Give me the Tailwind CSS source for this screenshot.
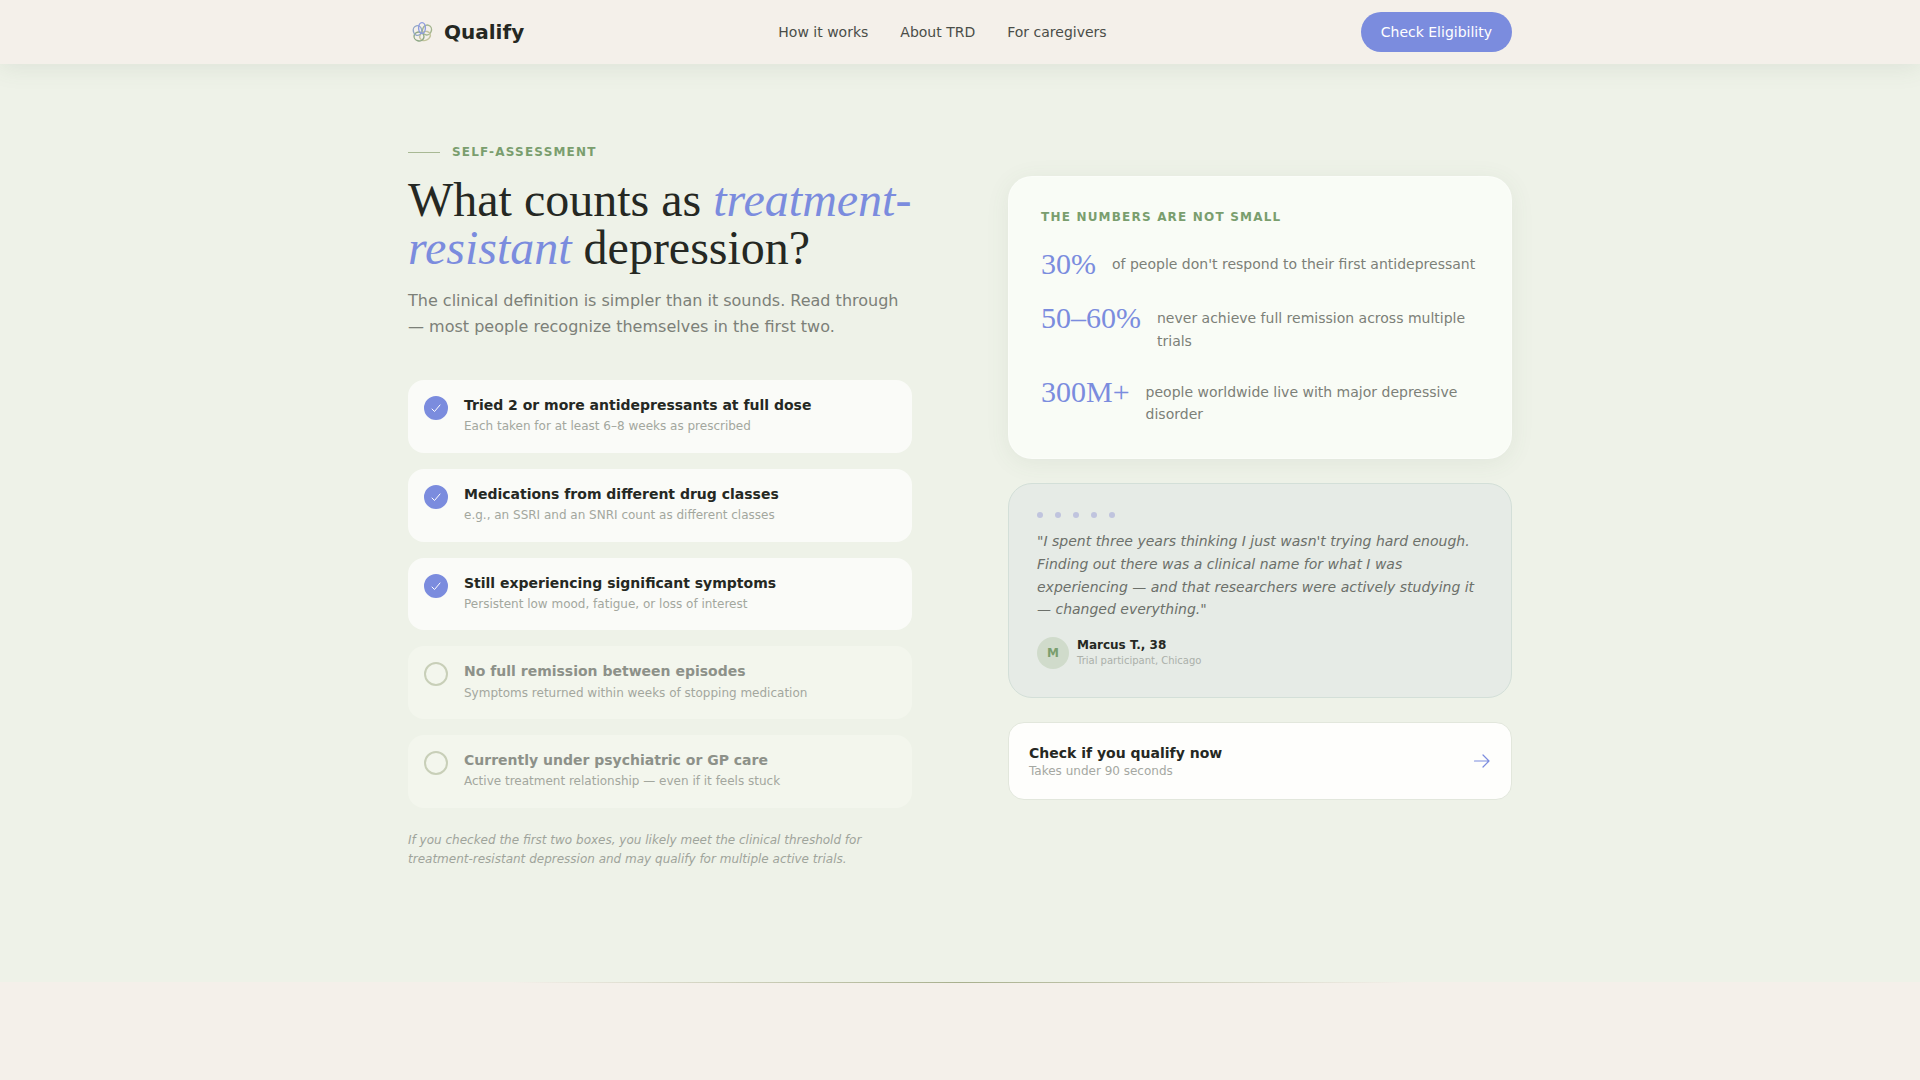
<!DOCTYPE html>
<html lang="en">
<head>
    <meta charset="UTF-8">
    <meta name="viewport" content="width=device-width, initial-scale=1.0">
    <title>Qualify</title>
    <script src="https://cdn.jsdelivr.net/npm/@tailwindcss/browser@4"></script>
</head>
<body class="min-h-screen bg-[#f4f0ea] font-['DejaVu_Sans',sans-serif] text-[#252823]">
    <!-- Navigation -->
    <header class="sticky top-0 z-10 bg-[#f4f0ea] shadow-[0_4px_24px_rgba(80,100,80,0.1)]">
        <div class="mx-auto flex h-16 max-w-[1200px] items-center justify-between px-12">
            <a href="#" class="flex items-center gap-2">
                <svg class="size-7" viewBox="0 0 28 28" fill="none" stroke-width="1.4" aria-hidden="true">
                    <ellipse cx="19" cy="12" rx="4.400" ry="5" stroke="#a3b58f" transform="rotate(20 19 12)" />
                    <ellipse cx="17" cy="18" rx="5.500" ry="4.400" stroke="#c3c49c" transform="rotate(-25 17 18)" />
                    <ellipse cx="11" cy="18.500" rx="5" ry="4.400" stroke="#8fa886" transform="rotate(15 11 18.500)" />
                    <ellipse cx="9.500" cy="12.500" rx="4.200" ry="4.800" stroke="#93a7c6" transform="rotate(-15 9.500 12.500)" />
                    <ellipse cx="14" cy="10" rx="3.400" ry="5.400" stroke="#8c9be0" />
                </svg>
                <span class="text-xl font-bold">Qualify</span>
            </a>
            <nav class="flex gap-8 text-sm text-[#4a4d48]">
                <a href="#">How it works</a>
                <a href="#">About TRD</a>
                <a href="#">For caregivers</a>
            </nav>
            <button type="button" class="h-10 rounded-full bg-[#7b8cde] px-5 text-sm text-white">Check Eligibility</button>
        </div>
    </header>

    <!-- Self-assessment -->
    <main class="bg-[#eef2e8]">
        <div class="mx-auto grid max-w-[1200px] grid-cols-2 gap-24 px-12 pt-20 pb-28">
            <section>
                <div class="mb-4 flex items-center gap-3">
                    <span class="h-px w-8 bg-[#a8b994]"></span>
                    <span class="text-xs font-bold tracking-widest text-[#7a9e6e]">SELF-ASSESSMENT</span>
                </div>
                <h1 class="font-['Liberation_Serif',serif] text-5xl leading-none">What counts as <em class="text-[#7b8cde]">treatment-resistant</em> depression?</h1>
                <p class="mt-4 leading-relaxed text-[#7c8078]">The clinical definition is simpler than it sounds. Read through — most people recognize themselves in the first two.</p>

                <div class="mt-10 flex flex-col gap-4">
                    <label class="group flex items-start gap-4 rounded-2xl bg-[#f3f6ed] p-4 has-checked:bg-[#fafbf8]">
                        <span class="grid shrink-0 place-items-center">
                            <input type="checkbox" checked class="peer col-start-1 row-start-1 size-6 appearance-none rounded-full border-2 border-[#c8cfb8] checked:border-[#7b8cde] checked:bg-[#7b8cde]">
                            <svg class="col-start-1 row-start-1 hidden size-3 peer-checked:block" viewBox="0 0 12 12" fill="none" stroke="#fff" stroke-linecap="round" stroke-linejoin="round" aria-hidden="true"><path d="M2 7l2.500 2.500L10 3" /></svg>
                        </span>
                        <span>
                            <span class="block text-sm leading-snug font-bold text-[#8d9189] group-has-checked:text-[#252823]">Tried 2 or more antidepressants at full dose</span>
                            <span class="mt-0.5 block text-xs leading-relaxed text-[#a3a79e]">Each taken for at least 6–8 weeks as prescribed</span>
                        </span>
                    </label>
                    <label class="group flex items-start gap-4 rounded-2xl bg-[#f3f6ed] p-4 has-checked:bg-[#fafbf8]">
                        <span class="grid shrink-0 place-items-center">
                            <input type="checkbox" checked class="peer col-start-1 row-start-1 size-6 appearance-none rounded-full border-2 border-[#c8cfb8] checked:border-[#7b8cde] checked:bg-[#7b8cde]">
                            <svg class="col-start-1 row-start-1 hidden size-3 peer-checked:block" viewBox="0 0 12 12" fill="none" stroke="#fff" stroke-linecap="round" stroke-linejoin="round" aria-hidden="true"><path d="M2 7l2.500 2.500L10 3" /></svg>
                        </span>
                        <span>
                            <span class="block text-sm leading-snug font-bold text-[#8d9189] group-has-checked:text-[#252823]">Medications from different drug classes</span>
                            <span class="mt-0.5 block text-xs leading-relaxed text-[#a3a79e]">e.g., an SSRI and an SNRI count as different classes</span>
                        </span>
                    </label>
                    <label class="group flex items-start gap-4 rounded-2xl bg-[#f3f6ed] p-4 has-checked:bg-[#fafbf8]">
                        <span class="grid shrink-0 place-items-center">
                            <input type="checkbox" checked class="peer col-start-1 row-start-1 size-6 appearance-none rounded-full border-2 border-[#c8cfb8] checked:border-[#7b8cde] checked:bg-[#7b8cde]">
                            <svg class="col-start-1 row-start-1 hidden size-3 peer-checked:block" viewBox="0 0 12 12" fill="none" stroke="#fff" stroke-linecap="round" stroke-linejoin="round" aria-hidden="true"><path d="M2 7l2.500 2.500L10 3" /></svg>
                        </span>
                        <span>
                            <span class="block text-sm leading-snug font-bold text-[#8d9189] group-has-checked:text-[#252823]">Still experiencing significant symptoms</span>
                            <span class="mt-0.5 block text-xs leading-relaxed text-[#a3a79e]">Persistent low mood, fatigue, or loss of interest</span>
                        </span>
                    </label>
                    <label class="group flex items-start gap-4 rounded-2xl bg-[#f3f6ed] p-4 has-checked:bg-[#fafbf8]">
                        <span class="grid shrink-0 place-items-center">
                            <input type="checkbox" class="peer col-start-1 row-start-1 size-6 appearance-none rounded-full border-2 border-[#c8cfb8] checked:border-[#7b8cde] checked:bg-[#7b8cde]">
                            <svg class="col-start-1 row-start-1 hidden size-3 peer-checked:block" viewBox="0 0 12 12" fill="none" stroke="#fff" stroke-linecap="round" stroke-linejoin="round" aria-hidden="true"><path d="M2 7l2.500 2.500L10 3" /></svg>
                        </span>
                        <span>
                            <span class="block text-sm leading-snug font-bold text-[#8d9189] group-has-checked:text-[#252823]">No full remission between episodes</span>
                            <span class="mt-0.5 block text-xs leading-relaxed text-[#a3a79e]">Symptoms returned within weeks of stopping medication</span>
                        </span>
                    </label>
                    <label class="group flex items-start gap-4 rounded-2xl bg-[#f3f6ed] p-4 has-checked:bg-[#fafbf8]">
                        <span class="grid shrink-0 place-items-center">
                            <input type="checkbox" class="peer col-start-1 row-start-1 size-6 appearance-none rounded-full border-2 border-[#c8cfb8] checked:border-[#7b8cde] checked:bg-[#7b8cde]">
                            <svg class="col-start-1 row-start-1 hidden size-3 peer-checked:block" viewBox="0 0 12 12" fill="none" stroke="#fff" stroke-linecap="round" stroke-linejoin="round" aria-hidden="true"><path d="M2 7l2.500 2.500L10 3" /></svg>
                        </span>
                        <span>
                            <span class="block text-sm leading-snug font-bold text-[#8d9189] group-has-checked:text-[#252823]">Currently under psychiatric or GP care</span>
                            <span class="mt-0.5 block text-xs leading-relaxed text-[#a3a79e]">Active treatment relationship — even if it feels stuck</span>
                        </span>
                    </label>
                </div>

                <p class="mt-[23px] text-xs leading-relaxed text-[#9fa49b] italic">If you checked the first two boxes, you likely meet the clinical threshold for treatment-resistant depression and may qualify for multiple active trials.</p>
            </section>

            <aside class="flex flex-col gap-6 pt-8">
                <div class="rounded-3xl border border-white/40 bg-[#f9fcf6] p-8 shadow-[0_4px_24px_rgba(80,100,80,0.08)]">
                    <h2 class="mb-6 text-xs font-bold tracking-widest text-[#7a9e6e]">THE NUMBERS ARE NOT SMALL</h2>
                    <dl class="flex flex-col gap-6">
                        <div class="flex items-start gap-4">
                            <dt class="shrink-0 font-['Liberation_Serif',serif] text-3xl leading-none text-[#7b8cde]">30%</dt>
                            <dd class="mt-1 text-sm leading-relaxed text-[#7c8078]">of people don't respond to their first antidepressant</dd>
                        </div>
                        <div class="flex items-start gap-4">
                            <dt class="shrink-0 font-['Liberation_Serif',serif] text-3xl leading-none text-[#7b8cde]">50–60%</dt>
                            <dd class="mt-1 text-sm leading-relaxed text-[#7c8078]">never achieve full remission across multiple trials</dd>
                        </div>
                        <div class="flex items-start gap-4">
                            <dt class="shrink-0 font-['Liberation_Serif',serif] text-3xl leading-none text-[#7b8cde]">300M+</dt>
                            <dd class="mt-1 text-sm leading-relaxed text-[#7c8078]">people worldwide live with major depressive disorder</dd>
                        </div>
                    </dl>
                </div>

                <figure class="rounded-3xl border border-[#d3dfd8] bg-[#e6ebe6] p-7">
                    <div class="mb-3 flex gap-3" aria-hidden="true">
                        <span class="size-1.5 rounded-full bg-[#c0c4de]"></span>
                        <span class="size-1.5 rounded-full bg-[#c0c4de]"></span>
                        <span class="size-1.5 rounded-full bg-[#c0c4de]"></span>
                        <span class="size-1.5 rounded-full bg-[#c0c4de]"></span>
                        <span class="size-1.5 rounded-full bg-[#c0c4de]"></span>
                    </div>
                    <blockquote class="mb-4 text-sm leading-relaxed text-[#6c706a] italic">"I spent three years thinking I just wasn't trying hard enough. Finding out there was a clinical name for what I was experiencing — and that researchers were actively studying it — changed everything."</blockquote>
                    <figcaption class="flex items-center gap-2">
                        <span class="flex size-8 items-center justify-center rounded-full bg-[#d0dbcb] text-xs font-bold text-[#7a9e6e]">M</span>
                        <div>
                            <p class="text-xs font-bold">Marcus T., 38</p>
                            <p class="text-[10px] leading-4 text-[#abb0aa]">Trial participant, Chicago</p>
                        </div>
                    </figcaption>
                </figure>

                <a href="#" class="flex items-center justify-between rounded-2xl border border-[#e2e7dc] bg-[#fefefc] p-5">
                    <div>
                        <p class="text-sm font-bold">Check if you qualify now</p>
                        <p class="text-xs text-[#a5a8a2]">Takes under 90 seconds</p>
                    </div>
                    <svg class="size-5" viewBox="0 0 20 20" fill="none" stroke="#7b8cde" stroke-width="1.2" stroke-linecap="round" stroke-linejoin="round" aria-hidden="true"><path d="M3.500 10h14.500M12 4l6 6-6 6" /></svg>
                </a>
            </aside>
        </div>
    </main>
    <div class="mx-auto h-px max-w-4xl bg-linear-to-r from-transparent via-[#a8b08e] to-transparent"></div>
</body>
</html>
